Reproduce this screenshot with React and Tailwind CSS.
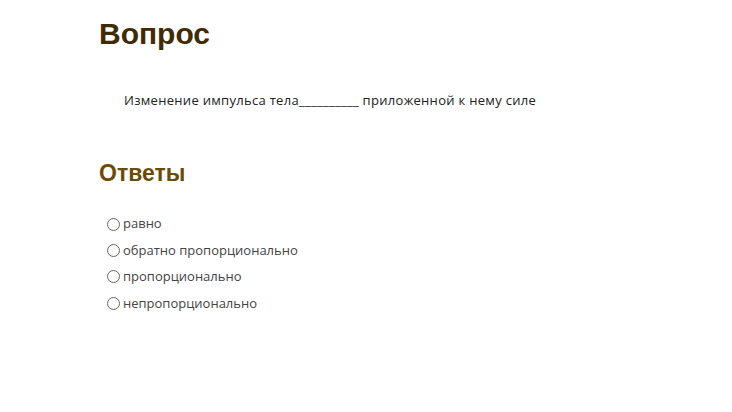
import React from 'react';

const answers = ['равно', 'обратно пропорционально', 'пропорционально', 'непропорционально'];

export default function App() {
  return (
    <div className="min-h-screen bg-white pl-[99px] pt-[14px]" style={{ fontFamily: '"Open Sans", sans-serif' }}>
      <h1 className="text-[30px] font-bold leading-[40px] text-[#3f2b05]" style={{ fontFamily: '"Liberation Sans", Arial, sans-serif' }}>
        Вопрос
      </h1>
      <p className="mt-[37px] pl-[25px] text-[13px] leading-[18px] tracking-[0.3px] text-[#222]">
        Изменение импульса тела__________ приложенной к нему силе
      </p>
      <h2 className="mt-[49px] text-[23px] font-bold leading-[30px] text-[#6b4c06]" style={{ fontFamily: '"Liberation Sans", Arial, sans-serif' }}>
        Ответы
      </h2>
      <div className="mt-[23px] flex flex-col pl-[8px]">
        {answers.map((a) => (
          <label key={a} className="flex h-[26.4px] items-center gap-[3px] text-[13px] text-[#444]">
            <span className="h-[13px] w-[13px] rounded-full border border-[#666] bg-white" />
            {a}
          </label>
        ))}
      </div>
    </div>
  );
}
